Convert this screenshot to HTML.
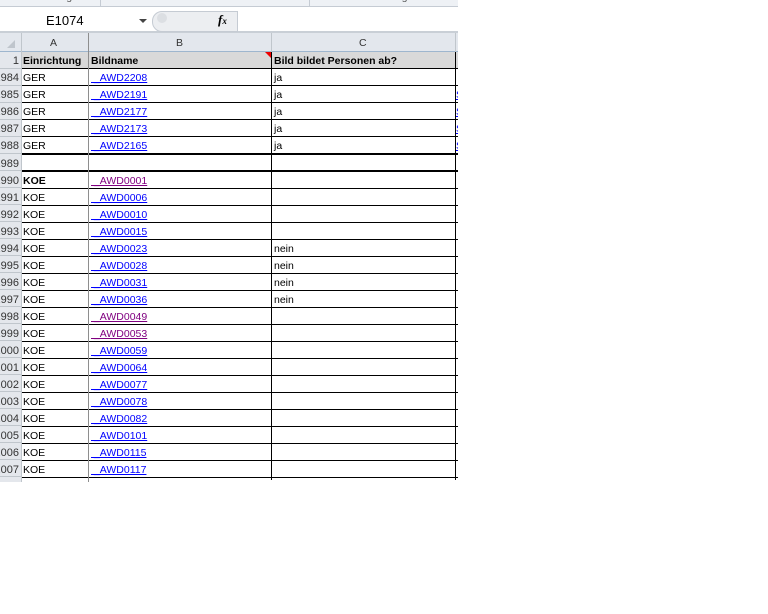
<!DOCTYPE html>
<html><head><meta charset="utf-8"><style>
body{margin:0;width:768px;height:614px;background:#fff;position:relative;overflow:hidden;font-family:"Liberation Sans",sans-serif;font-size:10.5px}
.a{position:absolute}
.t{position:absolute;white-space:nowrap;line-height:17px;top:0}
.lnk{color:#0000ff;text-decoration:underline}
.vis{color:#800080;text-decoration:underline}
#clip{position:absolute;left:0;top:0;width:458px;height:614px;overflow:hidden}
</style></head><body>
<div id="clip">
<div class="a" style="left:0;top:0;width:458px;height:6px;background:#eef1f5;border-bottom:1px solid #c5cbd3"></div>
<div class="a" style="left:100px;top:0;width:1px;height:6px;background:#c5cbd3"></div>
<div class="a" style="left:309px;top:0;width:1px;height:6px;background:#c5cbd3"></div>
<div class="t" style="left:2px;top:-11px;color:#555">Zwischenablage</div>
<div class="t" style="left:172px;top:-11px;color:#555">Schriftart</div>
<div class="t" style="left:352px;top:-11px;color:#555">Ausrichtung</div>
<div class="a" style="left:0;top:31px;width:458px;height:2px;background:#c9cfd6"></div>
<div class="t" style="left:46px;top:12px;font-size:13px">E1074</div>
<div class="a" style="left:139px;top:19px;width:0;height:0;border-left:4px solid transparent;border-right:4px solid transparent;border-top:4px solid #444"></div>
<div class="a" style="left:152px;top:11px;width:84px;height:19px;background:#eceef1;border:1px solid #c5cbd3;border-radius:10px 0 0 10px"></div>
<div class="a" style="left:157px;top:13px;width:10px;height:10px;border-radius:50%;background:#dcdfe3"></div>
<div class="t" style="left:218px;top:11px;font-family:'Liberation Serif',serif;font-style:italic;font-weight:bold;font-size:13px">f<span style="font-size:9px">x</span></div>
<div class="a" style="left:237px;top:11px;width:1px;height:21px;background:#c5cbd3"></div>
<div class="a" style="left:0;top:33px;width:458px;height:18px;background:#e3e7ed;border-bottom:1px solid #9eb6ce"></div>
<div class="a" style="left:7px;top:40px;width:0;height:0;border-left:8px solid transparent;border-bottom:8px solid #bfc5cc"></div>
<div class="t" style="left:50px;top:35px;color:#333">A</div>
<div class="t" style="left:176px;top:35px;color:#333">B</div>
<div class="t" style="left:359px;top:35px;color:#333">C</div>
<div class="a" style="left:21px;top:33px;width:1px;height:19px;background:#c0c6cc"></div>
<div class="a" style="left:88px;top:33px;width:1px;height:19px;background:#8e8e8e"></div>
<div class="a" style="left:271px;top:33px;width:1px;height:19px;background:#c0c6cc"></div>
<div class="a" style="left:455px;top:33px;width:1px;height:19px;background:#c0c6cc"></div>
<div class="a" style="left:0;top:52px;width:21px;height:430px;background:#e4e7ec;border-right:1px solid #c0c6cc"></div>
<div class="a" style="left:22px;top:52px;width:436px;height:16px;background:#d9d9d9"></div>
<div class="a" style="left:265px;top:52px;width:0;height:0;border-left:6px solid transparent;border-top:6px solid #e00"></div>
<div id="rows"></div>
</div>
<script>
var h='';
function row(y,num,a,b,bc,c,bold,bh){
 h+='<div class="t" style="right:'+(458-19)+'px;top:'+(y+1)+'px;color:#333;font-size:11px">'+num+'</div>';
 h+='<div class="t" style="left:23px;top:'+(y+1)+'px;'+(bold?'font-weight:bold':'')+'">'+a+'</div>';
 if(b)h+='<div class="t '+bc+'" style="left:91px;top:'+(y+1)+'px;'+(bh?'font-weight:bold':'')+'">'+b+'</div>';
 if(c)h+='<div class="t" style="left:274px;top:'+(y+1)+'px;'+(bh?'font-weight:bold':'')+'">'+c+'</div>';
}
row(52,'1','Einrichtung','Bildname','', 'Bild bildet Personen ab?',true,true);
var g=['2208','2191','2177','2173','2165'];
for(var i=0;i<5;i++){row(69+17*i,1984+i,'GER','&nbsp;_AWD'+g[i],'lnk','ja');
 if(i>0)h+='<div class="t lnk" style="left:456px;top:'+(70+17*i)+'px">S</div>';}
row(155,'1989','','','','');
var k=['0001','0006','0010','0015','0023','0028','0031','0036','0049','0053','0059','0064','0077','0078','0082','0101','0115','0117'];
for(var i=0;i<18;i++){
 row(172+17*i,1990+i,'KOE','&nbsp;_AWD'+k[i],(i==0||i==8||i==9)?'vis':'lnk',(i>=4&&i<=7)?'nein':'',i==0);}
[68,85,102,119,136].forEach(function(y){h+='<div class="a" style="left:22px;top:'+y+'px;width:436px;height:1px;background:#000"></div>'});
h+='<div class="a" style="left:22px;top:153px;width:436px;height:2px;background:#000"></div>';
h+='<div class="a" style="left:22px;top:170px;width:436px;height:2px;background:#000"></div>';
for(var i=0;i<18;i++)h+='<div class="a" style="left:22px;top:'+(188+17*i)+'px;width:436px;height:1px;background:#000"></div>';
h+='<div class="a" style="left:88px;top:52px;width:1px;height:430px;background:#8e8e8e"></div>';
h+='<div class="a" style="left:271px;top:52px;width:1px;height:428px;background:#000"></div>';
h+='<div class="a" style="left:455px;top:52px;width:1px;height:428px;background:#000"></div>';
for(var i=0;i<25;i++)h+='<div class="a" style="left:0;top:'+(68+17*i)+'px;width:21px;height:1px;background:#c0c6cc"></div>';
document.getElementById('rows').innerHTML=h;
</script>
</body></html>
